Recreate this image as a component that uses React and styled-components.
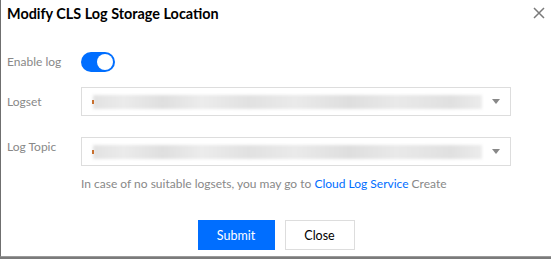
import styled, { createGlobalStyle } from "styled-components";

const GlobalStyle = createGlobalStyle`
  body {
    margin: 0;
    background: #7b7b7b;
    font-family: Lato, "Liberation Sans", sans-serif;
  }
`;

const Dialog = styled.div`
  width: 551px;
  height: 257px;
  box-sizing: border-box;
  background: #fff;
  border-left: 1px solid #6f6f6f;
  border-bottom: 1px solid #9a9a9a;
  display: flex;
  flex-direction: column;
`;

const Header = styled.div`
  display: flex;
  justify-content: space-between;
  align-items: center;
  height: 26px;
  padding: 0 6px 0 6px;
`;

const Title = styled.h2`
  margin: 0;
  font-size: 14.4px;
  font-weight: 700;
  color: #000;
`;

const CloseIcon = styled.button`
  border: 0;
  background: none;
  padding: 0;
  width: 12px;
  height: 12px;
  display: flex;
  cursor: pointer;
`;

const Body = styled.div`
  padding: 0 6px;
  display: flex;
  flex-direction: column;
`;

const Row = styled.div`
  display: flex;
  align-items: ${(p) => (p.center ? "center" : "flex-start")};
  margin-top: ${(p) => p.top}px;
`;

const Label = styled.div`
  width: 74px;
  flex: none;
  font-size: 12px;
  line-height: 18px;
  color: #888;
  padding-top: ${(p) => p.offset || 0}px;
`;

const Toggle = styled.div`
  width: 34px;
  height: 20px;
  border-radius: 10px;
  background: #006eff;
  position: relative;
  &::after {
    content: "";
    position: absolute;
    top: 2px;
    right: 2px;
    width: 16px;
    height: 16px;
    border-radius: 50%;
    background: #fff;
  }
`;

const Select = styled.div`
  width: 430px;
  height: 29px;
  box-sizing: border-box;
  border: 1px solid #dddddd;
  display: flex;
  align-items: center;
  padding: 0 10px 0 10px;
  gap: 10px;
`;

const Blurred = styled.div`
  flex: 1;
  height: 16px;
  position: relative;
  &::before {
    content: "";
    position: absolute;
    inset: 1px 0 1px 1px;
    background: linear-gradient(
      90deg,
      #e2e2e2 0%,
      #ebebeb 8%,
      #dfdfdf 18%,
      #ececec 28%,
      #e1e1e1 40%,
      #eaeaea 52%,
      #dedede 66%,
      #e9e9e9 78%,
      #e0e0e0 92%,
      #ececec 100%
    );
    filter: blur(1.5px);
  }
  &::after {
    content: "";
    position: absolute;
    left: 0;
    top: 6px;
    width: 2px;
    height: 4px;
    background: #c8702e;
  }
`;

const Arrow = styled.span`
  width: 0;
  height: 0;
  border-left: 4px solid transparent;
  border-right: 4px solid transparent;
  border-top: 5px solid #888;
  flex: none;
`;

const Help = styled.p`
  margin: 9px 0 0 74px;
  font-size: 12px;
  line-height: 18px;
  color: #888;
`;

const Link = styled.a`
  color: #006eff;
  text-decoration: none;
`;

const Footer = styled.div`
  display: flex;
  justify-content: center;
  gap: 10px;
  margin-top: 27px;
`;

const Button = styled.button`
  height: 30px;
  min-width: ${(p) => p.width}px;
  box-sizing: border-box;
  font-family: inherit;
  font-size: 12.5px;
  border: 1px solid ${(p) => (p.primary ? "#006eff" : "#dddddd")};
  background: ${(p) => (p.primary ? "#006eff" : "#fff")};
  color: ${(p) => (p.primary ? "#fff" : "#000")};
  padding: 0 12px;
  cursor: pointer;
`;

const SelectField = () => (
  <Select>
    <Blurred />
    <Arrow />
  </Select>
);

export default function App() {
  return (
    <>
      <GlobalStyle />
      <Dialog>
        <Header>
          <Title>Modify CLS Log Storage Location</Title>
          <CloseIcon aria-label="close">
            <svg width="12" height="12" viewBox="0 0 12 12">
              <path d="M1 1L11 11M11 1L1 11" stroke="#7a7a7a" strokeWidth="1.5" />
            </svg>
          </CloseIcon>
        </Header>
        <Body>
          <Row center top={26}>
            <Label>Enable log</Label>
            <Toggle />
          </Row>
          <Row top={15}>
            <Label offset={6}>Logset</Label>
            <SelectField />
          </Row>
          <Row top={21}>
            <Label offset={1}>Log Topic</Label>
            <SelectField />
          </Row>
          <Help>
            In case of no suitable logsets, you may go to{" "}
            <Link href="#">Cloud Log Service</Link> Create
          </Help>
        </Body>
        <Footer>
          <Button primary width={77}>Submit</Button>
          <Button width={70}>Close</Button>
        </Footer>
      </Dialog>
    </>
  );
}
